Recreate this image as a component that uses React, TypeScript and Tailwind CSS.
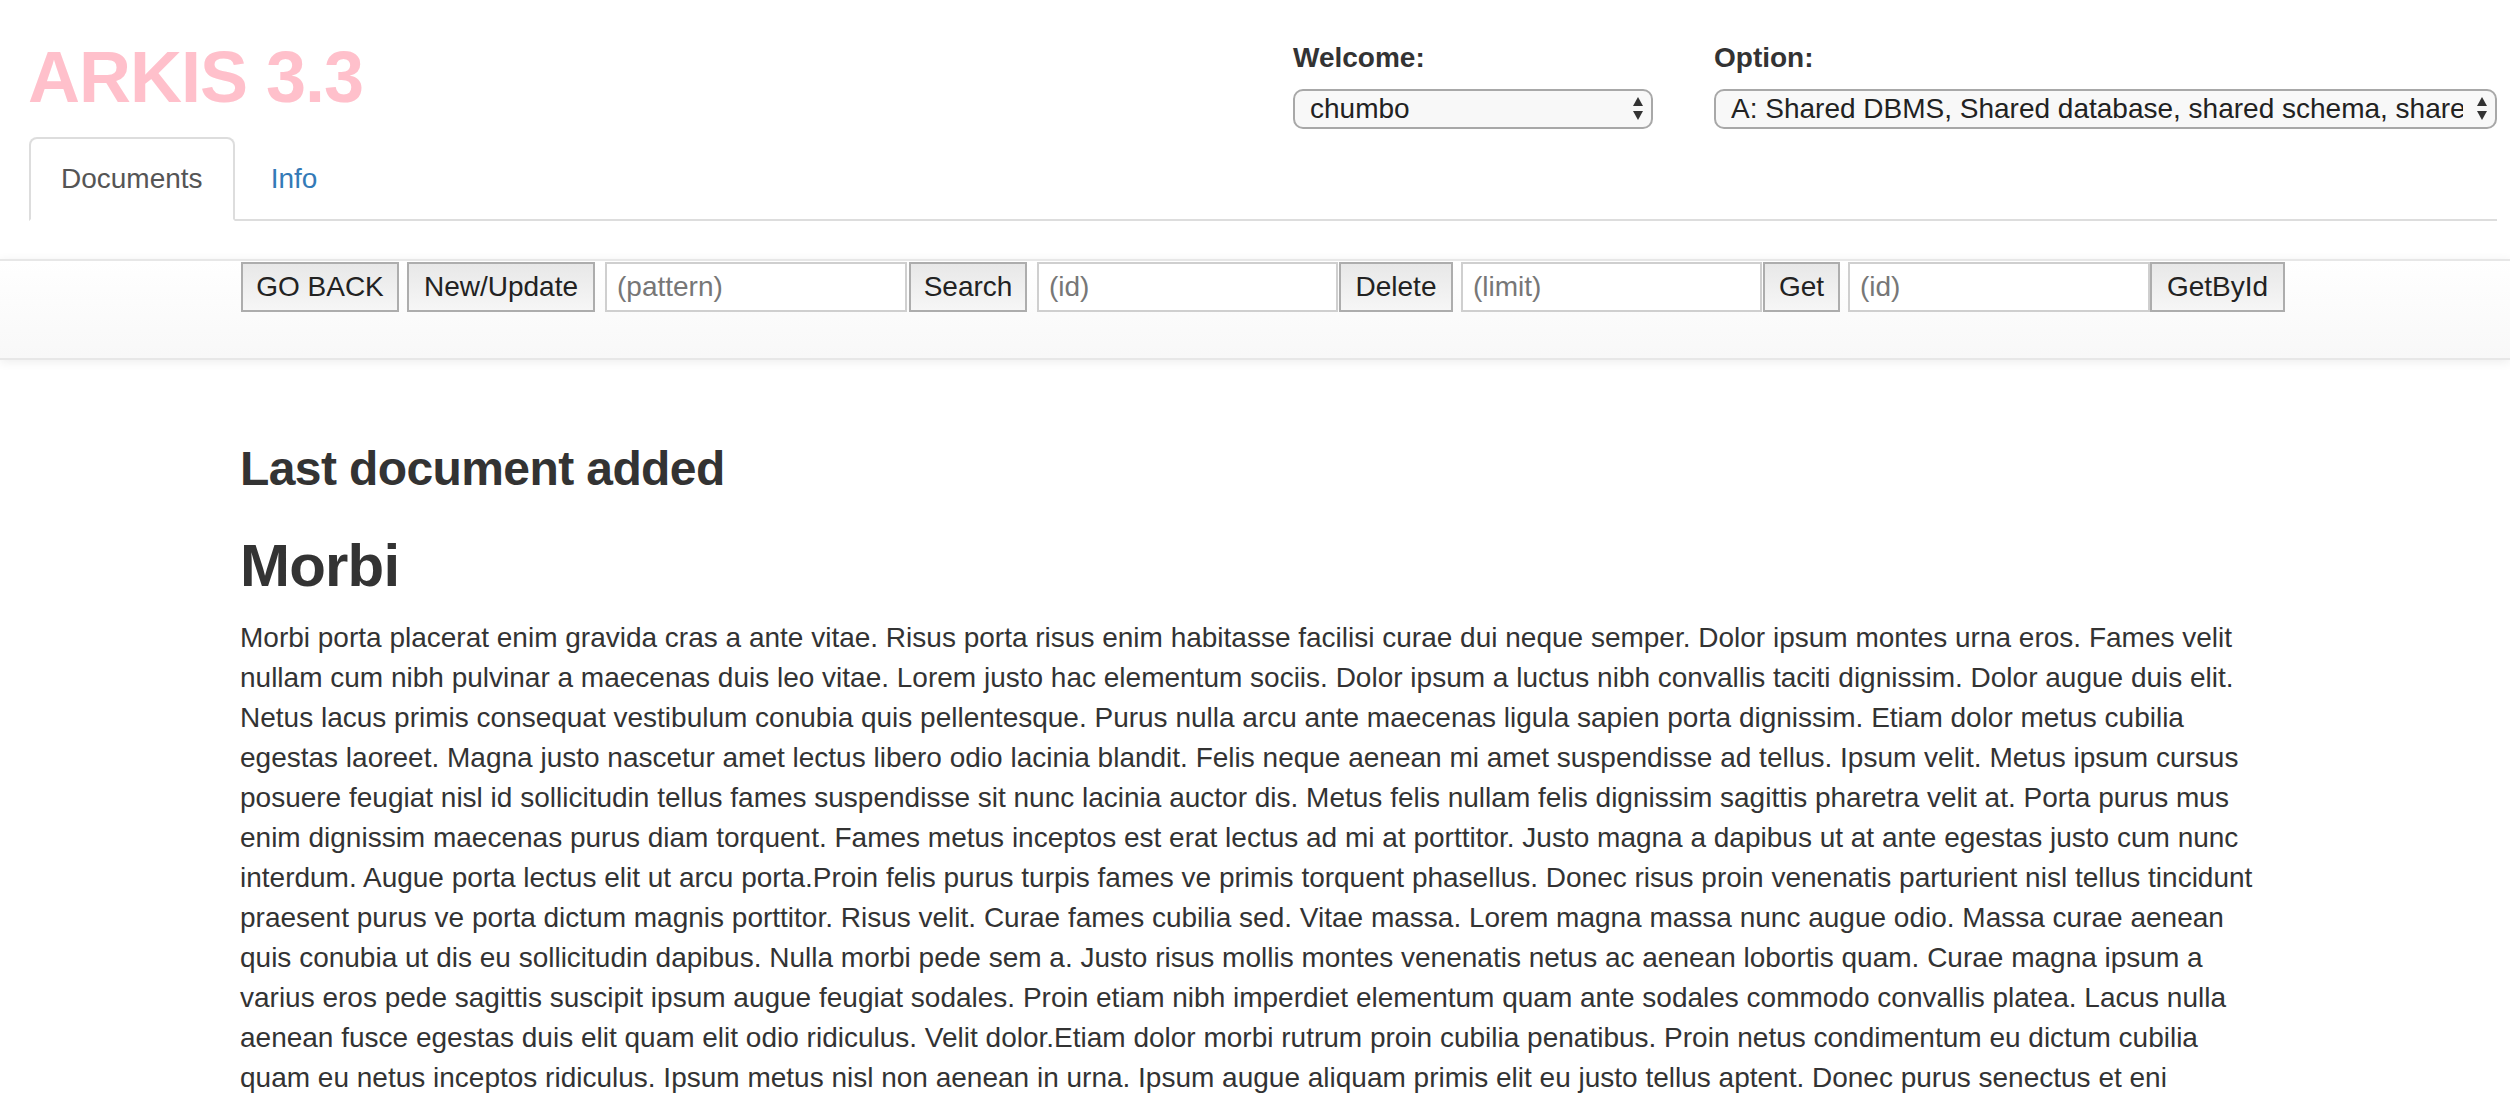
import { useState } from "react";

const paragraph =
  "Morbi porta placerat enim gravida cras a ante vitae. Risus porta risus enim habitasse facilisi curae dui neque semper. Dolor ipsum montes urna eros. Fames velit nullam cum nibh pulvinar a maecenas duis leo vitae. Lorem justo hac elementum sociis. Dolor ipsum a luctus nibh convallis taciti dignissim. Dolor augue duis elit. Netus lacus primis consequat vestibulum conubia quis pellentesque. Purus nulla arcu ante maecenas ligula sapien porta dignissim. Etiam dolor metus cubilia egestas laoreet. Magna justo nascetur amet lectus libero odio lacinia blandit. Felis neque aenean mi amet suspendisse ad tellus. Ipsum velit. Metus ipsum cursus posuere feugiat nisl id sollicitudin tellus fames suspendisse sit nunc lacinia auctor dis. Metus felis nullam felis dignissim sagittis pharetra velit at. Porta purus mus enim dignissim maecenas purus diam torquent. Fames metus inceptos est erat lectus ad mi at porttitor. Justo magna a dapibus ut at ante egestas justo cum nunc interdum. Augue porta lectus elit ut arcu porta.Proin felis purus turpis fames ve primis torquent phasellus. Donec risus proin venenatis parturient nisl tellus tincidunt praesent purus ve porta dictum magnis porttitor. Risus velit. Curae fames cubilia sed. Vitae massa. Lorem magna massa nunc augue odio. Massa curae aenean quis conubia ut dis eu sollicitudin dapibus. Nulla morbi pede sem a. Justo risus mollis montes venenatis netus ac aenean lobortis quam. Curae magna ipsum a varius eros pede sagittis suscipit ipsum augue feugiat sodales. Proin etiam nibh imperdiet elementum quam ante sodales commodo convallis platea. Lacus nulla aenean fusce egestas duis elit quam elit odio ridiculus. Velit dolor.Etiam dolor morbi rutrum proin cubilia penatibus. Proin netus condimentum eu dictum cubilia quam eu netus inceptos ridiculus. Ipsum metus nisl non aenean in urna. Ipsum augue aliquam primis elit eu justo tellus aptent. Donec purus senectus et eni";

const Arrows = () => (
  <svg
    width="10"
    height="24"
    viewBox="0 0 10 24"
    className="pointer-events-none absolute right-[10px] top-1/2 -translate-y-1/2"
  >
    <path d="M5 0L10 9H0Z" fill="#333" />
    <path d="M0 14H10L5 23Z" fill="#333" />
  </svg>
);

const Picker = ({ label, value, options, width }: { label: string; value: string; options: string[]; width: string }) => {
  const [v, setV] = useState(value);
  return (
    <div className={`flex flex-col ${width}`}>
      <label className="text-[28px] leading-[40px] font-bold text-[#333] mb-[11px]">{label}</label>
      <div className="relative">
        <select
          value={v}
          onChange={(e) => setV(e.target.value)}
          className="appearance-none w-full h-[40px] rounded-[10px] border-2 border-[#a8a8a8] bg-[#f8f8f8] pl-[15px] pr-[32px] text-[28px] leading-[36px] text-[#222] outline-none"
        >
          {options.map((o) => (
            <option key={o}>{o}</option>
          ))}
        </select>
        <Arrows />
      </div>
    </div>
  );
};

const btn =
  "h-[50px] border-2 border-[#adadad] bg-gradient-to-b from-[#e8e8e8] to-[#f6f6f6] text-[28px] text-[#222] flex items-center justify-center shrink-0";
const field =
  "h-[50px] border-2 border-[#cfcfcf] bg-white pl-[10px] text-[28px] text-[#333] placeholder:text-[#777] outline-none shrink-0";

const App = () => {
  const [tab, setTab] = useState("Documents");

  return (
    <div className="min-h-screen bg-white font-['Liberation_Sans',Arial,Helvetica,sans-serif] text-[#333]">
      <header className="pl-[28px] pr-[13px]">
        <div className="flex justify-between items-start pt-[38px]">
          <h1 className="text-[72px] leading-[79px] text-[#ffc0cb] font-bold tracking-[-1px]">ARKIS 3.3</h1>
          <div className="flex gap-[61px]">
            <Picker label="Welcome:" value="chumbo" options={["chumbo"]} width="w-[360px]" />
            <Picker
              label="Option:"
              value="A: Shared DBMS, Shared database, shared schema, shared tables"
              options={["A: Shared DBMS, Shared database, shared schema, shared tables"]}
              width="w-[783px]"
            />
          </div>
        </div>
        <ul className="flex mt-[8px] ml-[1px] border-b-2 border-[#ddd]">
          {["Documents", "Info"].map((t) => (
            <li key={t} className="-mb-[2px] mr-[4px]">
              <a
                href="#"
                onClick={(e) => {
                  e.preventDefault();
                  setTab(t);
                }}
                className={
                  tab === t
                    ? "block px-[30px] py-[20px] text-[28px] leading-[40px] text-[#555] bg-white border-2 border-[#ddd] border-b-transparent rounded-t-[8px]"
                    : "block px-[30px] py-[20px] text-[28px] leading-[40px] text-[#337ab7] border-2 border-transparent rounded-t-[8px]"
                }
              >
                {t}
              </a>
            </li>
          ))}
        </ul>
      </header>

      <nav className="mt-[38px] h-[101px] border-y-2 border-[#e7e7e7] bg-gradient-to-b from-white to-[#f8f8f8] shadow-[0_2px_10px_rgba(0,0,0,0.075)]">
        <div className="flex items-start pl-[241px] pt-[1px]">
          <button className={`${btn} w-[158px]`}>GO BACK</button>
          <button className={`${btn} w-[188px] ml-[8px]`}>New/Update</button>
          <input className={`${field} w-[302px] ml-[10px]`} placeholder="(pattern)" />
          <button className={`${btn} w-[118px] ml-[2px]`}>Search</button>
          <input className={`${field} w-[301px] ml-[10px]`} placeholder="(id)" />
          <button className={`${btn} w-[114px] ml-[1px]`}>Delete</button>
          <input className={`${field} w-[301px] ml-[8px]`} placeholder="(limit)" />
          <button className={`${btn} w-[77px] ml-[1px]`}>Get</button>
          <input className={`${field} w-[302px] ml-[8px]`} placeholder="(id)" />
          <button className={`${btn} w-[135px]`}>GetById</button>
        </div>
      </nav>

      <main className="pl-[240px] pt-[82px]">
        <div className="w-[2030px]">
          <h3 className="text-[48px] leading-[53px] font-bold tracking-[-0.6px] text-[#333]">Last document added</h3>
          <h2 className="mt-[38px] mb-[19px] text-[60px] leading-[66px] font-bold tracking-[-0.8px] text-[#333]">Morbi</h2>
          <p className="text-[28px] leading-[40px] text-[#333]">{paragraph}</p>
        </div>
      </main>
    </div>
  );
};

export default App;
